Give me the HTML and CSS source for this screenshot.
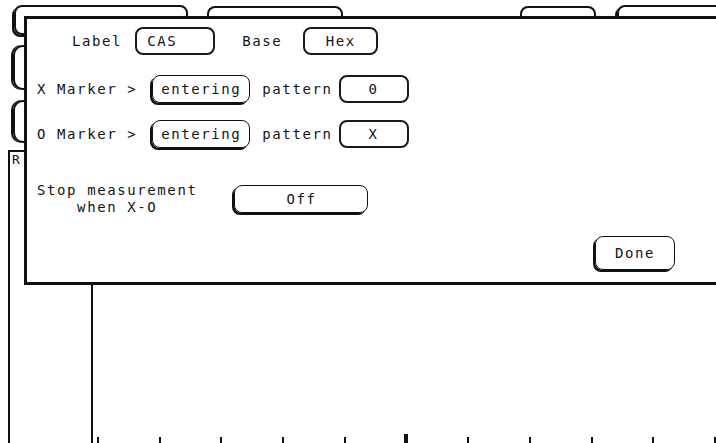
FILE: index.html
```html
<!DOCTYPE html>
<html lang="en">
<head>
  <meta charset="UTF-8" />
  <meta name="viewport" content="width=device-width, initial-scale=1.0" />
  <title>Marker Setup</title>
  <link rel="stylesheet" href="styles.css">
</head>
<body>
  <div class="screen">
    <div class="tabs">
      <div class="tab tab-raised tab-1"></div>
      <div class="tab tab-2"></div>
      <div class="tab tab-3"></div>
      <div class="tab tab-raised tab-4"></div>
    </div>

    <div class="side-keys">
      <div class="side-key"></div>
      <div class="side-key side-key-short"></div>
    </div>

    <div class="trace">
      <div class="trace-label">R</div>
      <div class="trace-plot">
        <div class="ticks">
          <span></span><span></span><span></span><span></span><span></span>
          <span class="tick-mark"></span>
          <span></span><span></span><span></span><span></span><span></span>
        </div>
      </div>
    </div>

    <div class="dialog">
      <div class="row row-first">
        <span class="caption caption-label">Label</span>
        <span class="field field-cas">CAS</span>
        <span class="caption caption-base">Base</span>
        <span class="field field-hex">Hex</span>
      </div>

      <div class="row row-x">
        <span class="caption">X Marker &gt;</span>
        <span class="key key-entering">entering</span>
        <span class="caption caption-pattern">pattern</span>
        <span class="field field-pattern">0</span>
      </div>

      <div class="row row-o">
        <span class="caption">O Marker &gt;</span>
        <span class="key key-entering">entering</span>
        <span class="caption caption-pattern">pattern</span>
        <span class="field field-pattern">X</span>
      </div>

      <div class="row row-stop">
        <div class="caption-stack">
          <span>Stop measurement</span>
          <span>when X-O</span>
        </div>
        <span class="key key-off">Off</span>
      </div>

      <div class="row row-done">
        <span class="key key-done">Done</span>
      </div>
    </div>
  </div>
</body>
</html>
```

FILE: styles.css
```css
body {
  margin: 0;
  padding: 0;
  background-color: #fff;
  color: #141414;
  font-family: "DejaVu Sans Mono", "Liberation Mono", monospace;
  font-size: 14px;
  letter-spacing: 1.6px;
  overflow: hidden;
}
.screen {
  position: relative;
  width: 716px;
  height: 443px;
  overflow: hidden;
}

/* background softkeys */
.tabs {
  display: flex;
  align-items: flex-start;
  height: 45px;
  padding-top: 5px;
  box-sizing: border-box;
}
.tab {
  height: 30px;
  border: 2px solid #111;
  border-radius: 8px;
  box-sizing: border-box;
  flex-shrink: 0;
}
.tab-raised {
  box-shadow: -2px 2px 0 #111;
}
.tab-1 {
  margin-left: 14px;
  width: 174px;
}
.tab-2 {
  margin-left: 19px;
  margin-top: 1px;
  width: 136px;
}
.tab-3 {
  margin-left: 177px;
  margin-top: 1px;
  width: 76px;
}
.tab-4 {
  margin-left: 21px;
  width: 120px;
}
.side-keys {
  display: flex;
  flex-direction: column;
  gap: 10px;
  padding-left: 13px;
}
.side-key {
  width: 80px;
  height: 45px;
  border: 2px solid #111;
  border-radius: 10px;
  box-shadow: -2px 0 0 #111;
  box-sizing: border-box;
}
.side-key-short {
  height: 43px;
}

/* trace area */
.trace {
  display: flex;
  height: 293px;
  margin-top: 7px;
  margin-left: 8px;
}
.trace-label {
  flex-shrink: 0;
  width: 16px;
  border-left: 2px solid #111;
  border-top: 2px solid #111;
  box-sizing: border-box;
  font-size: 13px;
  letter-spacing: 0;
  line-height: 15px;
  padding-left: 2px;
}
.trace-plot {
  flex: 1;
  min-width: 0;
  overflow: hidden;
  margin-left: 67px;
  border-left: 2px solid #111;
  display: flex;
  flex-direction: column;
  justify-content: flex-end;
}
.ticks {
  display: flex;
  align-items: flex-end;
  padding-left: 4px;
}
.ticks span {
  flex-shrink: 0;
  width: 61.7px;
  height: 6px;
  box-sizing: border-box;
  border-left: 2px solid #111;
}
.ticks .tick-mark {
  height: 9px;
  border-left-width: 4px;
  margin-left: -1px;
  width: 62.7px;
}

/* dialog */
.dialog {
  position: absolute;
  left: 24px;
  top: 16px;
  width: 720px;
  height: 269px;
  box-sizing: border-box;
  border: 3px solid #111;
  background-color: #fff;
}
.row {
  display: flex;
  align-items: center;
  height: 28px;
}
.row-first {
  margin-top: 8px;
  padding-left: 45px;
}
.row-x {
  margin-top: 20px;
  padding-left: 10px;
}
.row-o {
  margin-top: 17px;
  padding-left: 10px;
}
.row-stop {
  margin-top: 34px;
  height: 34px;
  padding-left: 10px;
}
.row-done {
  margin-top: 19px;
  height: 35px;
  padding-left: 568px;
}
.caption {
  white-space: pre;
}
.caption-base {
  margin-left: 27px;
}
.caption-pattern {
  margin-left: 12px;
}
.caption-stack {
  display: flex;
  flex-direction: column;
  align-items: center;
  line-height: 17px;
}
.field,
.key {
  display: flex;
  align-items: center;
  justify-content: center;
  height: 28px;
  box-sizing: border-box;
  border: 2px solid #1a1a1a;
  border-radius: 8px;
}
.key {
  border-width: 1px;
  border-color: #111;
  box-shadow: -2px 2px 0 #111;
}
.field-cas {
  margin-left: 13px;
  width: 80px;
  justify-content: flex-start;
  padding-left: 10px;
}
.field-hex {
  margin-left: 21px;
  width: 75px;
}
.field-pattern {
  margin-left: 6px;
  width: 70px;
}
.key-entering {
  margin-left: 15px;
  width: 98px;
}
.key-off {
  margin-left: 37px;
  width: 134px;
}
.key-done {
  width: 80px;
  height: 34px;
}
```
